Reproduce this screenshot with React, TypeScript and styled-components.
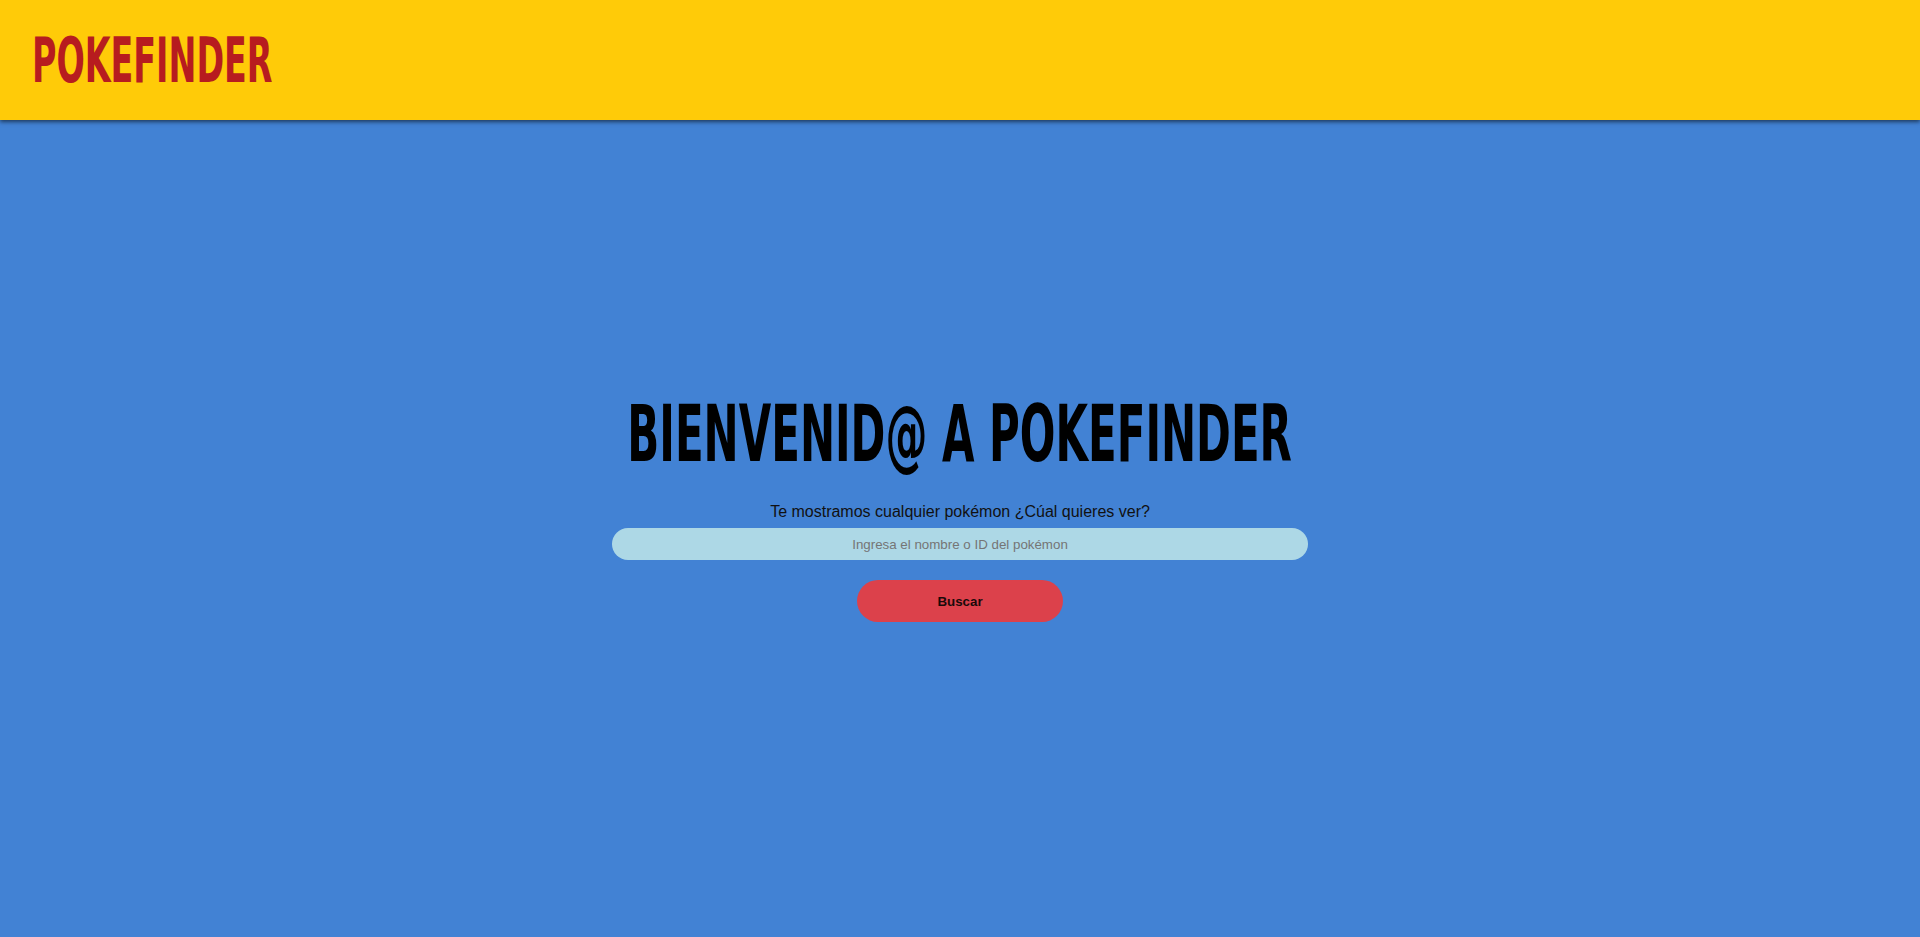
import React from "react";
import styled, { createGlobalStyle } from "styled-components";

const GlobalStyle = createGlobalStyle`
  html, body {
    margin: 0;
    padding: 0;
    background: #4282d4;
    font-family: "Liberation Sans", Arial, sans-serif;
  }
  * { box-sizing: border-box; }
`;

const Page = styled.div`
  min-height: 937px;
  background: #4282d4;
  display: flex;
  flex-direction: column;
`;

const Header = styled.header`
  height: 120px;
  background: #ffcb08;
  display: flex;
  align-items: center;
  padding-left: 32px;
  box-shadow: 0 2px 4px rgba(0, 0, 0, 0.55);
  position: relative;
  z-index: 1;
`;

const Logo = styled.h2`
  margin: 0;
  font-family: "DejaVu Sans", sans-serif;
  font-weight: 700;
  font-size: 63px;
  line-height: 1;
  color: #b71c1f;
  transform: scaleX(0.529);
  transform-origin: left center;
  white-space: nowrap;
`;

const Main = styled.main`
  flex: 1;
  display: flex;
  flex-direction: column;
  align-items: center;
  padding-top: 274px;
`;

const Title = styled.h1`
  margin: 0;
  font-family: "DejaVu Sans", sans-serif;
  font-weight: 700;
  font-size: 78px;
  line-height: 80px;
  color: #000;
  white-space: nowrap;
  transform: scaleX(0.538);
  transform-origin: center;
`;

const Subtitle = styled.p`
  margin: 28px 0 6px;
  font-size: 16px;
  line-height: 20px;
  color: #111;
`;

const SearchInput = styled.input`
  width: 696px;
  height: 32px;
  border: none;
  outline: none;
  border-radius: 16px;
  background: #add8e6;
  text-align: center;
  font-family: "Liberation Sans", Arial, sans-serif;
  font-size: 13.333px;
  color: #222;
  &::placeholder {
    color: #757575;
  }
`;

const SearchButton = styled.button`
  margin-top: 20px;
  width: 206px;
  height: 42px;
  border: none;
  border-radius: 21px;
  background: #dc414b;
  font-family: "Liberation Sans", Arial, sans-serif;
  font-weight: 700;
  font-size: 13.333px;
  color: #1a0a0a;
  cursor: pointer;
`;

export default function App() {
  return (
    <>
      <GlobalStyle />
      <Page>
        <Header>
          <Logo>POKEFINDER</Logo>
        </Header>
        <Main>
          <Title>BIENVENID@ A POKEFINDER</Title>
          <Subtitle>Te mostramos cualquier pokémon ¿Cúal quieres ver?</Subtitle>
          <SearchInput type="text" placeholder="Ingresa el nombre o ID del pokémon" />
          <SearchButton>Buscar</SearchButton>
        </Main>
      </Page>
    </>
  );
}
